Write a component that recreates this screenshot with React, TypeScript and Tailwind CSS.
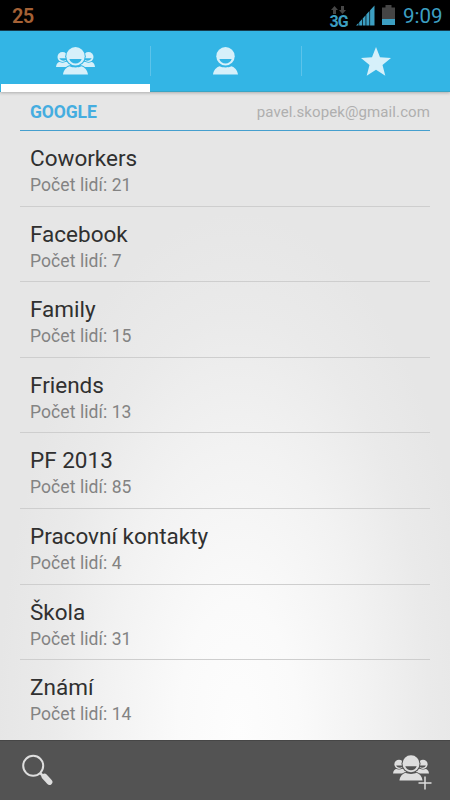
import React from "react";

const groups = [
  { name: "Coworkers", count: 21 },
  { name: "Facebook", count: 7 },
  { name: "Family", count: 15 },
  { name: "Friends", count: 13 },
  { name: "PF 2013", count: 85 },
  { name: "Pracovní kontakty", count: 4 },
  { name: "Škola", count: 31 },
  { name: "Známí", count: 14 },
];

function Person({ bg }: { bg: string }) {
  return (
    <>
      <path d="M7 27.500c.5-4.500 3.500-7.300 6.500-8.300 3 1.600 9 1.600 12 0 3 1 6 3.800 6.500 8.300z" />
      <circle cx="19.500" cy="9.300" r="10.300" fill={bg} />
      <circle cx="19.500" cy="9.300" r="9.200" />
      <path d="M13.300 12h12.400c-1 3-3.200 4.400-6.200 4.400s-5.200-1.400-6.200-4.400z" fill={bg} />
    </>
  );
}

function Side({ bg }: { bg: string }) {
  return (
    <>
      <path d="M0 20c.3-3.300 2-4.800 4-5.200h6.500l4 2V20z" />
      <circle cx="6.500" cy="10" r="5.700" fill={bg} />
      <circle cx="6.500" cy="10" r="5" />
      <path d="M3.300 11.300h7v1.400c-2 1.600-5.500 1.300-7-1.400z" fill={bg} />
    </>
  );
}

function GroupIcon({ bg, className, fill }: { bg: string; className: string; fill: string }) {
  return (
    <svg viewBox="0 0 39 28" className={className} fill={fill}>
      <Side bg={bg} />
      <g transform="translate(39 0) scale(-1 1)">
        <Side bg={bg} />
      </g>
      <path d="M5.800 28c.5-5 4-8.600 7.500-9.700h12.400c3.500 1.100 7 4.700 7.500 9.700z" fill={bg} />
      <Person bg={bg} />
    </svg>
  );
}

function StatusBar() {
  return (
    <header className="flex h-[31px] shrink-0 items-start justify-between border-b border-[#173d50] bg-black pl-3 pr-2">
      <span className="pt-[3px] text-[20px] font-semibold leading-[27px] tracking-[-0.8px] text-[#a56135]">25</span>
      <div className="flex items-start text-[#3c9fc2]">
        <div className="flex w-[19px] flex-col items-center pt-[6px]">
          <svg viewBox="0 0 17 8" className="h-2 w-[17px]" fill="#464646">
            <path d="M4.500 0 8 4H6v4H3V4H1zM12.500 8 9 4h2V0h3v4h2z" />
          </svg>
          <span className="text-[16px] font-bold leading-[15px] tracking-[-1px]">3G</span>
        </div>
        <svg viewBox="0 0 19 21" className="ml-[8px] mt-[5px] h-[21px] w-[19px]" fill="#3c9fc2">
          <path d="M0 20.500 2.500 18v2.500zM3.200 17.300 6 14.300v6.200H3.200zM6.700 13.600l2.900-3.300v10.200H6.700zM10.300 9.600l3.100-3.500v14.400h-3.100zM14.100 5.300 18.500.500v20h-4.400z" />
        </svg>
        <svg viewBox="0 0 13 20" className="ml-[7px] mt-[5px] h-5 w-[13px]">
          <path d="M3.500 0h6v2.500H13V14H0V2.500h3.500z" fill="#454545" />
          <path d="M0 14h13v6H0z" fill="#3c9fc2" />
        </svg>
        <span className="ml-[8px] w-[39px] whitespace-nowrap pt-[3px] text-[20.5px] leading-[27px]">9:09</span>
      </div>
    </header>
  );
}

function Tabs() {
  return (
    <nav className="z-10 grid h-[61px] shrink-0 grid-cols-3 border-b border-[#39a5c5] bg-[#33b5e5] shadow-[0_1px_3px_rgba(0,0,0,0.25)]">
      <button className="flex flex-col items-center justify-between pl-px pt-4">
        <GroupIcon bg="#33b5e5" fill="#d6f0fa" className="h-7 w-[39px]" />
        <span className="-mb-px h-2 w-full bg-white" />
      </button>
      <button className="flex justify-center bg-[linear-gradient(#5cc3ea,#5cc3ea)] bg-[length:1px_30px] bg-[position:0_15px] bg-no-repeat pt-4">
        <svg viewBox="0 0 39 28" className="h-7 w-[39px]" fill="#d6f0fa">
          <Person bg="#33b5e5" />
        </svg>
      </button>
      <button className="flex justify-center bg-[linear-gradient(#5cc3ea,#5cc3ea)] bg-[length:1px_30px] bg-[position:1px_15px] bg-no-repeat pl-[2px] pt-4">
        <svg viewBox="0 0 30 29" className="h-[29px] w-[30px]" fill="#d6f0fa">
          <path d="m15 0 4 10.300 11 .7-8.500 7 2.800 10.700L15 22.700 5.700 28.700l2.800-10.700L0 11l11-.7z" />
        </svg>
      </button>
    </nav>
  );
}

export default function App() {
  return (
    <div className="flex h-[800px] w-[450px] flex-col overflow-hidden bg-[#e6e6e6] font-['Roboto','Noto_Sans',sans-serif]">
      <StatusBar />
      <Tabs />
      <main className="flex-1 bg-[radial-gradient(ellipse_240px_520px_at_238px_640px,#fdfdfd_0%,#fafafa_25%,#f2f2f2_55%,#eaeaea_80%,#e6e6e6_100%)] px-5">
        <div className="flex h-[39px] items-center justify-between border-b border-[#459fce] pl-2.5 pt-[3px]">
          <h2 className="text-[17.5px] font-bold tracking-[-0.1px] text-[#45ade0]">GOOGLE</h2>
          <span className="text-[15px] tracking-[0.1px] text-[#afafaf]">pavel.skopek@gmail.com</span>
        </div>
        <ul>
          {groups.map((group) => (
            <li key={group.name} className="h-[75.6px] border-b border-[#cecece] pl-2.5 pt-[13px] last:border-b-0">
              <div className="text-[22.5px] leading-[28px] text-[#303030]">{group.name}</div>
              <div className="pt-px text-[17.5px] leading-[24px] tracking-[0.08px] text-[#838383]">Počet lidí: {group.count}</div>
            </li>
          ))}
        </ul>
      </main>
      <footer className="flex h-[60px] shrink-0 items-start justify-between border-t border-[#464646] bg-[#535353] pl-[22px] pr-[18px]">
        <svg viewBox="0 0 31 32" className="mt-[13px] h-8 w-[31px]" fill="none" stroke="#dedede">
          <circle cx="11.200" cy="11.800" r="10" strokeWidth="2" />
          <path d="m18 18.800 4 4" strokeWidth="2.500" />
          <path d="m22.500 22.500 5 5.500" strokeWidth="5.800" strokeLinecap="round" />
        </svg>
        <div className="relative mt-[14px] h-9 w-[39px]">
          <GroupIcon bg="#535353" fill="#dedede" className="h-[26px] w-[36px]" />
          <svg viewBox="0 0 14 14" className="absolute left-[25px] top-[21px] size-[14px]" fill="none">
            <path d="M7 0v14M0 7h14" stroke="#535353" strokeWidth="4" />
            <path d="M7 .500v13M.500 7h13" stroke="#dedede" strokeWidth="1.500" />
          </svg>
        </div>
      </footer>
    </div>
  );
}
